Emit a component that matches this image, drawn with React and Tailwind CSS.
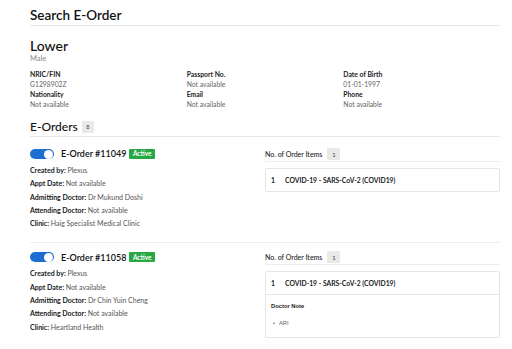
import React from 'react';

const orders = [
  {
    id: '11049',
    createdBy: 'Plexus',
    appt: 'Not available',
    admitting: 'Dr Mukund Doshi',
    attending: 'Not available',
    clinic: 'Haig Specialist Medical Clinic',
    note: null,
  },
  {
    id: '11058',
    createdBy: 'Plexus',
    appt: 'Not available',
    admitting: 'Dr Chin Yuin Cheng',
    attending: 'Not available',
    clinic: 'Heartland Health',
    note: 'ARI',
  },
];

const Field = ({ label, value }) => (
  <div>
    <div className="font-bold text-[#222] leading-[10px]">{label}</div>
    <div className="text-[#666] leading-[10px]">{value}</div>
  </div>
);

const Detail = ({ label, value }) => (
  <div className="leading-[13.3px] whitespace-nowrap">
    <span className="font-bold text-[#222]">{label}: </span>
    <span className="text-[#555]">{value}</span>
  </div>
);

const Toggle = () => (
  <div className="w-[24px] h-[10px] rounded-full bg-[#1c6fd1] relative shrink-0">
    <div className="absolute right-[1px] top-[0.5px] w-[9px] h-[9px] rounded-full bg-white" />
  </div>
);

const OrderRow = ({ order, first, last }) => (
  <div className={`flex ${first ? 'pt-[11px]' : 'pt-[8px]'} ${last ? '' : 'pb-[12px] border-b border-[#eee]'}`}>
    <div className="w-[235px] shrink-0">
      <div className="flex items-center h-[12px]">
        <Toggle />
        <span className="ml-[7px] text-[9px] font-semibold text-[#111]">E-Order #{order.id}</span>
        <span className="ml-[3px] bg-[#28a745] text-white text-[6.5px] font-bold px-[3.5px] h-[10px] flex items-center rounded-[1px]">Active</span>
      </div>
      <div className="mt-[4px] text-[7px]">
        <Detail label="Created by" value={order.createdBy} />
        <Detail label="Appt Date" value={order.appt} />
        <Detail label="Admitting Doctor" value={order.admitting} />
        <Detail label="Attending Doctor" value={order.attending} />
        <Detail label="Clinic" value={order.clinic} />
      </div>
    </div>
    <div className="flex-1">
      <div className="flex items-center h-[12px] pb-[1px] box-content border-b border-[#eee]">
        <span className="text-[7px] font-medium text-[#222]">No. of Order Items</span>
        <span className="ml-[5px] bg-[#e9e9e9] text-[6px] text-[#444] w-[13px] h-[12px] flex items-center justify-center rounded-[1px]">1</span>
      </div>
      <div className="mt-[6px] border border-[#e6e6e6] rounded-[2px] text-[6.8px]">
        <div className="flex items-center h-[22px] px-[5px] font-bold text-[#222]">
          <span className="w-[14px]">1</span>
          <span>COVID-19 - SARS-CoV-2 (COVID19)</span>
        </div>
        {order.note && (
          <div className="border-t border-[#e6e6e6] px-[5px] pt-[6px] pb-[9px] text-[5.8px] leading-[10px] font-['Liberation_Sans',Arial,sans-serif]">
            <div className="text-[#222] font-bold">Doctor Note</div>
            <div className="mt-[7px] ml-[2px] text-[#666] flex">
              <span className="w-[5px]">•</span>
              <span className="ml-[1px]">{order.note}</span>
            </div>
          </div>
        )}
      </div>
    </div>
  </div>
);

export default function App() {
  return (
    <div className="w-[512px] h-[349px] bg-white overflow-hidden font-['Lato',sans-serif]">
      <div className="mx-[30px] w-[470px] pt-[7px]">
        <h1 className="text-[13.5px] leading-[16px] font-semibold text-[#111] pb-[2px] border-b border-[#e8e8e8]">Search E-Order</h1>

        <div className="mt-[12px] text-[14px] leading-[16px] font-medium text-[#111]">Lower</div>
        <div className="mt-[1px] text-[7.5px] text-[#888] leading-[8px]">Male</div>

        <div className="mt-[6px] grid grid-cols-3 text-[6.8px]">
          <Field label="NRIC/FIN" value="G1298902Z" />
          <Field label="Passport No." value="Not available" />
          <Field label="Date of Birth" value="01-01-1997" />
          <Field label="Nationality" value="Not available" />
          <Field label="Email" value="Not available" />
          <Field label="Phone" value="Not available" />
        </div>

        <div className="mt-[10px] flex items-center pb-[1px] border-b border-[#e8e8e8]">
          <span className="text-[12px] leading-[16px] text-[#111] font-medium">E-Orders</span>
          <span className="ml-[4px] bg-[#e9e9e9] text-[5.5px] text-[#444] w-[12px] h-[12px] flex items-center justify-center rounded-[1px]">8</span>
        </div>

        {orders.map((o, i) => (
          <OrderRow key={o.id} order={o} first={i === 0} last={i === orders.length - 1} />
        ))}
      </div>
    </div>
  );
}
